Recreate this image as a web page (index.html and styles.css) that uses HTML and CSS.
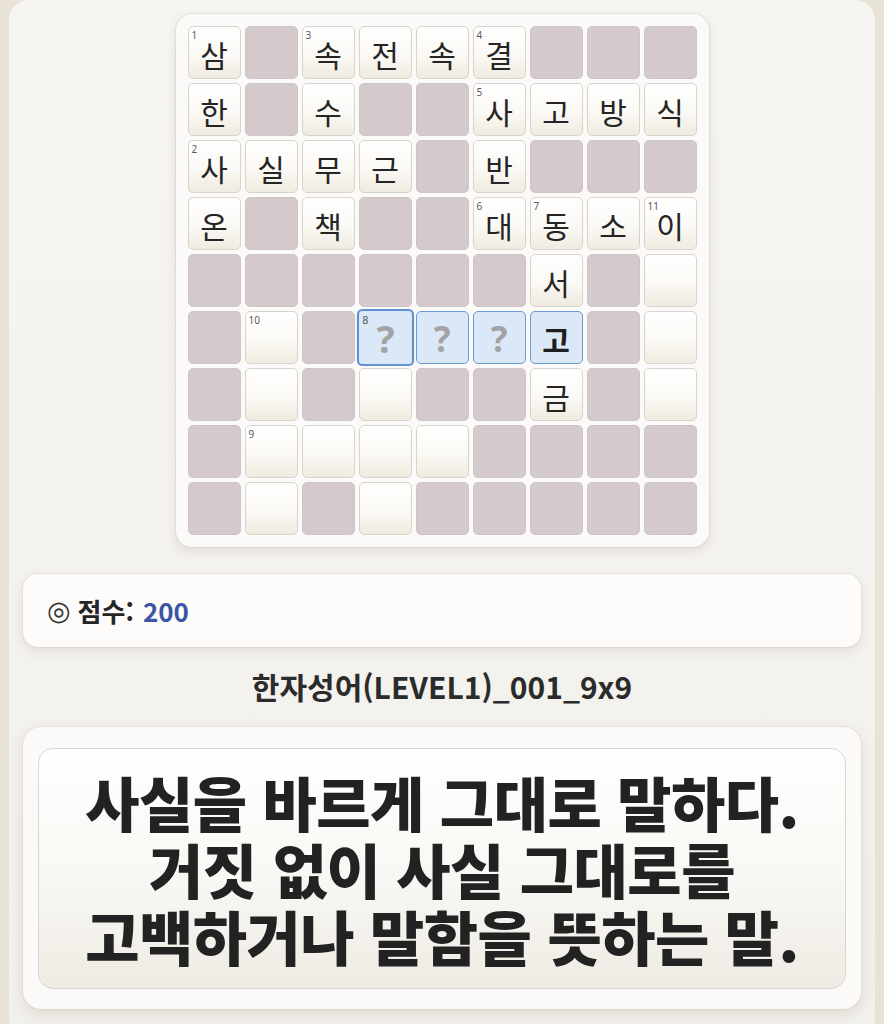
FILE: index.html
```html
<!DOCTYPE html>
<html lang="ko">
<head>
<meta charset="utf-8">
<title>한자성어 퍼즐</title>
<link rel="stylesheet" href="styles.css">
</head>
<body>
<div class="page">
  <div class="board-card">
    <div class="grid">
      <div class="cell w"><span class="num">1</span>삼</div>
      <div class="cell b"></div>
      <div class="cell w"><span class="num">3</span>속</div>
      <div class="cell w">전</div>
      <div class="cell w">속</div>
      <div class="cell w"><span class="num">4</span>결</div>
      <div class="cell b"></div>
      <div class="cell b"></div>
      <div class="cell b"></div>

      <div class="cell w">한</div>
      <div class="cell b"></div>
      <div class="cell w">수</div>
      <div class="cell b"></div>
      <div class="cell b"></div>
      <div class="cell w"><span class="num">5</span>사</div>
      <div class="cell w">고</div>
      <div class="cell w">방</div>
      <div class="cell w">식</div>

      <div class="cell w"><span class="num">2</span>사</div>
      <div class="cell w">실</div>
      <div class="cell w">무</div>
      <div class="cell w">근</div>
      <div class="cell b"></div>
      <div class="cell w">반</div>
      <div class="cell b"></div>
      <div class="cell b"></div>
      <div class="cell b"></div>

      <div class="cell w">온</div>
      <div class="cell b"></div>
      <div class="cell w">책</div>
      <div class="cell b"></div>
      <div class="cell b"></div>
      <div class="cell w"><span class="num">6</span>대</div>
      <div class="cell w"><span class="num">7</span>동</div>
      <div class="cell w">소</div>
      <div class="cell w"><span class="num">11</span>이</div>

      <div class="cell b"></div>
      <div class="cell b"></div>
      <div class="cell b"></div>
      <div class="cell b"></div>
      <div class="cell b"></div>
      <div class="cell b"></div>
      <div class="cell w">서</div>
      <div class="cell b"></div>
      <div class="cell w"></div>

      <div class="cell b"></div>
      <div class="cell w"><span class="num">10</span></div>
      <div class="cell b"></div>
      <div class="cell h sel"><span class="num">8</span><span class="q">?</span></div>
      <div class="cell h"><span class="q">?</span></div>
      <div class="cell h"><span class="q">?</span></div>
      <div class="cell h strong">고</div>
      <div class="cell b"></div>
      <div class="cell w"></div>

      <div class="cell b"></div>
      <div class="cell w"></div>
      <div class="cell b"></div>
      <div class="cell w"></div>
      <div class="cell b"></div>
      <div class="cell b"></div>
      <div class="cell w">금</div>
      <div class="cell b"></div>
      <div class="cell w"></div>

      <div class="cell b"></div>
      <div class="cell w"><span class="num">9</span></div>
      <div class="cell w"></div>
      <div class="cell w"></div>
      <div class="cell w"></div>
      <div class="cell b"></div>
      <div class="cell b"></div>
      <div class="cell b"></div>
      <div class="cell b"></div>

      <div class="cell b"></div>
      <div class="cell w"></div>
      <div class="cell b"></div>
      <div class="cell w"></div>
      <div class="cell b"></div>
      <div class="cell b"></div>
      <div class="cell b"></div>
      <div class="cell b"></div>
      <div class="cell b"></div>
    </div>
  </div>

  <div class="score-card">
    <span class="score-icon">◎</span>
    <span class="score-label">점수:</span>
    <span class="score-value">200</span>
  </div>

  <div class="title">한자성어(LEVEL1)_001_9x9</div>

  <div class="clue-card">
    <div class="clue-box">
      <div class="clue-text">
        <div class="clue-line">사실을 바르게 그대로 말하다.</div>
        <div class="clue-line">거짓 없이 사실 그대로를</div>
        <div class="clue-line">고백하거나 말함을 뜻하는 말.</div>
      </div>
    </div>
  </div>
</div>
</body>
</html>
```

FILE: styles.css
```css
* { box-sizing: border-box; }

html, body {
  margin: 0;
  padding: 0;
}

body {
  background: #e8e2d7;
  font-family: "Noto Sans CJK KR", "Noto Sans", sans-serif;
  color: #262626;
  overflow: hidden;
}

.page {
  margin: 0 9px;
  min-height: 1040px;
  background: linear-gradient(180deg, #f6f5f2 0%, #f4f2ee 60%, #f2f0eb 100%);
  border-radius: 20px 20px 0 0;
  padding: 14px 14px 0;
  display: flex;
  flex-direction: column;
  align-items: center;
}

.board-card {
  width: 533px;
  padding: 12px;
  background: #fbfaf8;
  border-radius: 16px;
  box-shadow: 0 4px 12px rgba(120, 105, 85, 0.16), 0 0 0 1px rgba(200, 190, 175, 0.25);
}

.grid {
  display: grid;
  grid-template-columns: repeat(9, 53px);
  grid-auto-rows: 53px;
  gap: 4px;
}

.cell {
  position: relative;
  border-radius: 5px;
  display: flex;
  align-items: center;
  justify-content: center;
  font-size: 30px;
  line-height: 1;
  color: #252525;
  padding-top: 2px;
}

.cell.b {
  background: #d4cacb;
  border: 1px solid #cfc5c7;
}

.cell.w {
  background: linear-gradient(180deg, #ffffff 0%, #fbf9f5 55%, #f0ebe0 100%);
  border: 1px solid #d9d4cb;
}

.cell.h {
  background: #dbe8f7;
  border: 1.5px solid #6a9bd8;
}

.cell.sel {
  transform: scale(1.08);
  z-index: 2;
  border: 2px solid #5f93d4;
}

.cell.strong {
  font-weight: 700;
  color: #1e1e1e;
}

.q {
  font-weight: 700;
  color: #a3a3a3;
  font-size: 35px;
  font-family: "Noto Sans", "Noto Sans CJK KR", sans-serif;
}

.num {
  position: absolute;
  top: 3px;
  left: 3px;
  font-size: 10px;
  line-height: 1;
  color: #5a5a5a;
  font-family: "Noto Sans", "DejaVu Sans", sans-serif;
}

.score-card {
  align-self: stretch;
  margin-top: 27px;
  height: 73px;
  background: #fdfcfb;
  border-radius: 15px;
  box-shadow: 0 4px 12px rgba(120, 105, 85, 0.15), 0 0 0 1px rgba(210, 200, 185, 0.25);
  display: flex;
  align-items: center;
  padding: 0 24px;
  font-size: 26px;
  font-weight: 700;
  gap: 7px;
}

.score-icon {
  font-weight: 400;
  font-size: 27px;
  color: #333;
  font-family: "DejaVu Sans", sans-serif;
}

.score-label {
  color: #252525;
}

.score-value {
  color: #3a55a6;
  margin-left: 2px;
}

.title {
  margin-top: 20px;
  font-size: 30px;
  font-weight: 700;
  color: #2b2b2b;
  text-align: center;
  line-height: 38px;
}

.clue-card {
  align-self: stretch;
  margin-top: 22px;
  height: 282px;
  background: #fbfaf8;
  border-radius: 18px;
  padding: 21px 15px 20px;
  box-shadow: 0 5px 14px rgba(120, 105, 85, 0.16), 0 0 0 1px rgba(210, 200, 185, 0.25);
}

.clue-box {
  height: 100%;
  border: 1px solid #d9d5cf;
  border-radius: 15px;
  background: linear-gradient(180deg, #ffffff 0%, #f8f7f3 55%, #efebe4 100%);
  display: flex;
  align-items: center;
  justify-content: center;
}

.clue-text {
  text-align: center;
  font-size: 59px;
  font-weight: 900;
  color: #222;
  letter-spacing: -0.5px;
}

.clue-line {
  line-height: 67px;
  height: 67px;
  white-space: nowrap;
}
```
